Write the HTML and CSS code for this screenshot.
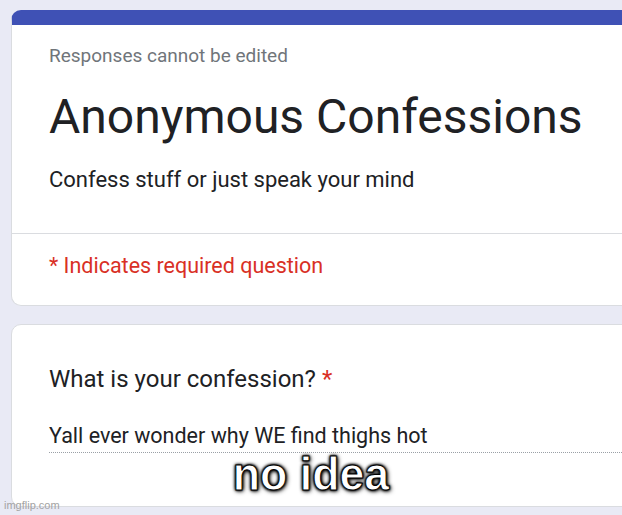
FILE: index.html
```html
<!DOCTYPE html>
<html lang="en">
<head>
  <meta charset="UTF-8">
  <title>Anonymous Confessions</title>
  <link rel="stylesheet" href="styles.css">
</head>
<body>
  <div class="page">
    <div class="card header-card">
      <div class="card-top">
        <p class="note">Responses cannot be edited</p>
        <h1 class="title">Anonymous Confessions</h1>
        <p class="description">Confess stuff or just speak your mind</p>
      </div>
      <div class="card-bottom">
        <p class="required">* Indicates required question</p>
      </div>
    </div>

    <div class="card question-card">
      <p class="question">What is your confession? <span class="star">*</span></p>
      <div class="answer">Yall ever wonder why WE find thighs hot</div>
    </div>
  </div>

  <div class="caption">no idea</div>
  <div class="watermark">imgflip.com</div>
</body>
</html>
```

FILE: styles.css
```css
:root {
  --accent: #3f51b5;
  --background: #e9eaf5;
  --border: #dadce0;
  --text: #202124;
  --text-secondary: #70757a;
  --required: #d93025;
}

* {
  margin: 0;
  padding: 0;
  box-sizing: border-box;
}

html, body {
  height: 100%;
  overflow: hidden;
}

body {
  font-family: Roboto, 'Liberation Sans', sans-serif;
  background: var(--background);
  color: var(--text);
  position: relative;
}

.page {
  display: flex;
  flex-direction: column;
  gap: 18px;
  padding: 10px 0 0 11px;
  width: 680px;
}

.card {
  background: #fff;
  border: 1px solid var(--border);
  border-radius: 10px;
}

.header-card {
  border-top: 15px solid var(--accent);
}

.card-top {
  padding: 21px 37px 40px;
  border-bottom: 1px solid var(--border);
}

.note {
  font-size: 19px;
  line-height: 20px;
  color: var(--text-secondary);
}

.title {
  font-size: 48px;
  font-weight: 400;
  line-height: 56px;
  margin-top: 23px;
}

.description {
  font-size: 22px;
  line-height: 26px;
  margin-top: 22px;
}

.card-bottom {
  padding: 19px 37px 26px;
}

.required {
  color: var(--required);
  font-size: 21.5px;
  line-height: 26px;
}

.question-card {
  height: 183px;
  padding: 39px 37px 0;
}

.question {
  font-size: 24px;
  line-height: 30px;
}

.star {
  color: var(--required);
}

.answer {
  margin-top: 29px;
  font-size: 21.5px;
  line-height: 26px;
  padding-bottom: 3px;
  border-bottom: 1px dotted #9aa0a6;
  margin-right: -40px;
}

.caption {
  position: absolute;
  left: 0;
  right: 0;
  top: 450px;
  text-align: center;
  font-family: 'Liberation Sans', Arial, sans-serif;
  font-size: 47px;
  font-weight: 700;
  line-height: 47px;
  color: #fff;
  transform: scaleX(0.95);
  -webkit-text-stroke: 1px #000;
  text-shadow: 0 0 2px #000, 0 0 3px #000, 0 0 4px #000, 1px 1px 5px #000;
}

.watermark {
  position: absolute;
  left: 4px;
  top: 499px;
  font-family: 'Liberation Sans', Arial, sans-serif;
  font-size: 11px;
  color: #a3a3a3;
}
```
